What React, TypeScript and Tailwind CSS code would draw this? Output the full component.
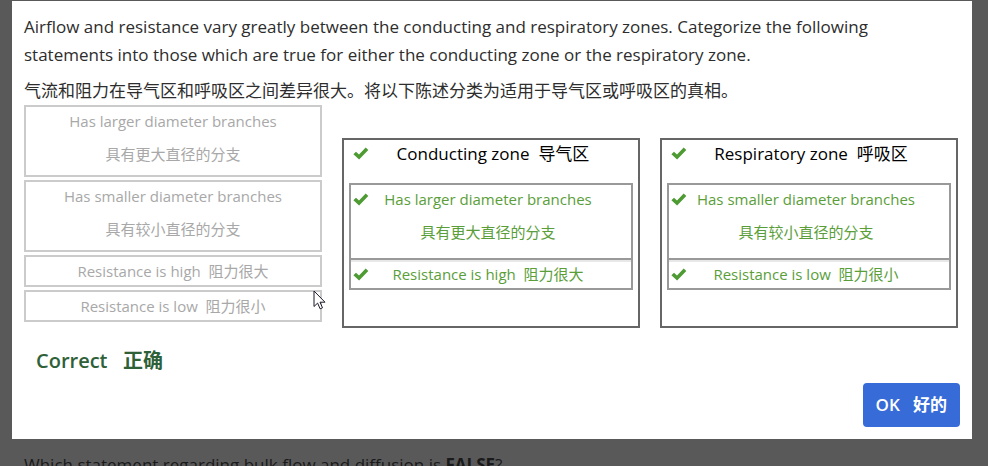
type Statement = { en: string; zh: string; stacked: boolean };

const largerBranches: Statement = { en: 'Has larger diameter branches', zh: '具有更大直径的分支', stacked: true };
const smallerBranches: Statement = { en: 'Has smaller diameter branches', zh: '具有较小直径的分支', stacked: true };
const highResistance: Statement = { en: 'Resistance is high', zh: '阻力很大', stacked: false };
const lowResistance: Statement = { en: 'Resistance is low', zh: '阻力很小', stacked: false };

const statements = [largerBranches, smallerBranches, highResistance, lowResistance];

const zones = [
  { en: 'Conducting zone', zh: '导气区', answers: [largerBranches, highResistance] },
  { en: 'Respiratory zone', zh: '呼吸区', answers: [smallerBranches, lowResistance] },
];

function CheckMark() {
  return (
    <svg aria-hidden="true" viewBox="0 0 16 13" className="h-[13px] w-4 shrink-0" fill="#4e9a33">
      <path d="M.4 7.2 3 4.7l3 2.7L12.7.5l2.6 2.4-9.2 9.6z" />
    </svg>
  );
}

function StatementText({ statement }: { statement: Statement }) {
  if (statement.stacked) {
    return (
      <>
        <p>{statement.en}</p>
        <p className="mt-3">{statement.zh}</p>
      </>
    );
  }
  return (
    <p>
      {statement.en}&nbsp; {statement.zh}
    </p>
  );
}

function Pointer() {
  return (
    <svg aria-hidden="true" viewBox="0 0 13 20" className="absolute -right-1.5 -top-0.5 h-5 w-[13px]">
      <path d="M1 1v15.5l3.6-3.4 2.5 5.7 2.4-1-2.5-5.6H12z" fill="white" stroke="#1b1b2b" strokeWidth="1" />
    </svg>
  );
}

export default function App() {
  return (
    <div className="h-screen overflow-hidden bg-[#595959] px-3 pt-px font-['Open_Sans','Noto_Sans_CJK_SC',sans-serif] text-[17px] text-[#2d2d2d]">
      <div className="mr-1 bg-white p-3" role="dialog" aria-label="Question">
        <p className="leading-7">
          Airflow and resistance vary greatly between the conducting and respiratory zones. Categorize the following
          statements into those which are true for either the conducting zone or the respiratory zone.
        </p>
        <p className="mt-2 leading-7">气流和阻力在导气区和呼吸区之间差异很大。将以下陈述分类为适用于导气区或呼吸区的真相。</p>

        <div className="mr-0.5 grid grid-cols-3 items-start gap-5 text-center text-[15px] leading-[21px]">
          <ul className="flex flex-col gap-[3px] text-[#a8a8a8]">
            {statements.map((statement, index) => (
              <li
                key={statement.en}
                className={`relative border-2 border-[#cbcbcb] pt-1 ${statement.stacked ? 'pb-[10px]' : 'pb-[3px]'}`}
              >
                <StatementText statement={statement} />
                {index === statements.length - 1 && <Pointer />}
              </li>
            ))}
          </ul>

          {zones.map((zone) => (
            <section key={zone.en} className="mt-[33px] min-h-[190px] border-2 border-[#666] px-[5px]">
              <div className="flex h-[43px] items-start pl-1 pt-[3px] text-black">
                <span className="pt-1">
                  <CheckMark />
                </span>
                <h2 className="flex-1 pr-4 text-[17px] leading-[21px]">
                  {zone.en}&nbsp; {zone.zh}
                </h2>
              </div>
              <ul className="border-2 border-[#999] text-[#5a9e3a]">
                {zone.answers.map((answer) => (
                  <li
                    key={answer.en}
                    className={`flex items-start pl-0.5 ${
                      answer.stacked
                        ? 'border-b-2 border-[#999] pb-[15px] pt-1'
                        : 'border-t-2 border-[#e8e8e8] pb-[3px] pt-0.5'
                    }`}
                  >
                    <span className="pt-1">
                      <CheckMark />
                    </span>
                    <div className="flex-1 pr-6">
                      <StatementText statement={answer} />
                    </div>
                  </li>
                ))}
              </ul>
            </section>
          ))}
        </div>

        <p className="ml-3 mt-[19px] text-xl leading-7 font-semibold text-[#2f6138]">
          Correct &nbsp; <span className="font-bold">正确</span>
        </p>
        <div className="mt-2 flex justify-end">
          <button type="button" className="h-11 rounded-sm bg-[#376bd8] px-[13px] font-semibold text-white">
            OK &nbsp; <span className="font-bold">好的</span>
          </button>
        </div>
      </div>
      <p className="ml-3 mt-3 leading-7 text-[#1a1a1a]">
        Which statement regarding bulk flow and diffusion is <b>FALSE</b>?
      </p>
    </div>
  );
}
